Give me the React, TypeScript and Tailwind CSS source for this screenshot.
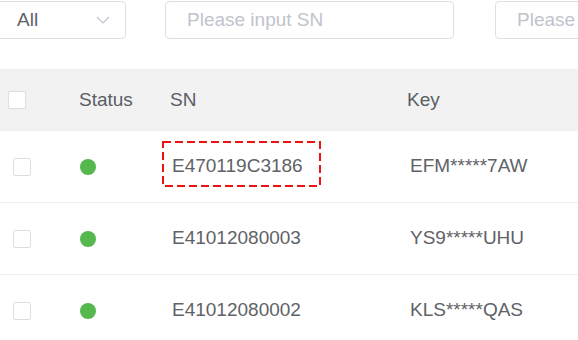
import React from 'react';

const rows = [
  { sn: 'E470119C3186', key: 'EFM*****7AW', highlight: true },
  { sn: 'E41012080003', key: 'YS9*****UHU', highlight: false },
  { sn: 'E41012080002', key: 'KLS*****QAS', highlight: false },
];

const Checkbox: React.FC<{ className?: string }> = ({ className = '' }) => (
  <span className={`block h-[18px] w-[18px] rounded-[2px] border border-[#dcdfe6] bg-white ${className}`} />
);

const App: React.FC = () => {
  return (
    <div className="h-[340px] w-[578px] overflow-hidden bg-white text-[19px] text-[#606266]" style={{ fontFamily: '"Liberation Sans", Arial, sans-serif' }}>
      {/* filters */}
      <div className="flex h-[69px] gap-[39px] pt-px">
        <div className="-ml-[4px] flex h-[38px] w-[130px] shrink-0 items-center justify-between rounded-[4px] border border-[#dcdfe6] pl-[20px] pr-[15px]">
          <span>All</span>
          <svg width="14" height="8" viewBox="0 0 14 8" fill="none" stroke="#c0c4cc" strokeWidth="1.2">
            <path d="M1 1l6 6 6-6" />
          </svg>
        </div>
        <div className="flex h-[38px] w-[289px] shrink-0 items-center rounded-[4px] border border-[#dcdfe6] px-[21px] text-[#c0c4cc]">
          Please input SN
        </div>
        <div className="ml-[2px] flex h-[38px] w-[289px] shrink-0 items-center rounded-[4px] border border-[#dcdfe6] px-[21px] text-[#c0c4cc]">
          Please input Key
        </div>
      </div>

      {/* table header */}
      <div className="grid h-[62px] grid-cols-[79px_91px_237px_1fr] items-center border-y border-[#ebeef5] bg-[#f2f2f2] text-[#5a5e66]">
        <div className="pl-[8px]">
          <Checkbox />
        </div>
        <div>Status</div>
        <div>SN</div>
        <div>Key</div>
      </div>

      {/* rows */}
      {rows.map((row) => (
        <div key={row.sn} className="grid h-[72px] grid-cols-[79px_91px_237px_1fr] items-center border-b border-[#ebeef5]">
          <div className="pl-[13px]">
            <Checkbox />
          </div>
          <div className="pl-px">
            <span className="block h-[16px] w-[16px] rounded-full bg-[#55b84f]" />
          </div>
          <div>
            <span className="relative -ml-[8px] flex h-[46px] w-[159px] items-center pl-[10px]">
              {row.highlight && (
                <svg className="absolute -top-[3px] left-0" width="159" height="46">
                  <rect x="1" y="1" width="157" height="44" fill="none" stroke="#ee1111" strokeWidth="2" strokeDasharray="8 4" />
                </svg>
              )}
              <span className="relative">{row.sn}</span>
            </span>
          </div>
          <div className="pl-[3px]">{row.key}</div>
        </div>
      ))}
    </div>
  );
};

export default App;
